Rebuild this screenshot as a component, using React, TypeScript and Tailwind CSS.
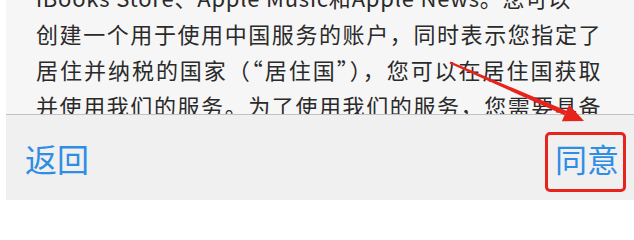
import React from "react";

const font = { fontFamily: '"Noto Sans CJK SC", "Noto Sans", sans-serif' };

export default function App() {
  return (
    <div className="relative w-[634px] h-[203px] bg-white flex overflow-hidden" style={font}>
      <div className="ml-[6px] mb-[3px] flex-1 flex flex-col">
        <div className="h-[114px] overflow-hidden bg-[#f6f6f6]">
          <div className="-mt-[21px] pl-[30px] w-[596px] text-[22px] leading-[36px] tracking-[1.5px] text-[#2a2a2a]">
            <div className="whitespace-nowrap tracking-[0.8px]">iBooks Store、Apple Music和Apple News。您可以</div>
            <div className="whitespace-nowrap text-justify [text-align-last:justify]">创建一个用于使用中国服务的账户，同时表示您指定了</div>
            <div className="whitespace-nowrap text-justify [text-align-last:justify]">居住并纳税的国家（“居住国”），您可以在居住国获取</div>
            <div className="whitespace-nowrap text-justify [text-align-last:justify]">并使用我们的服务。为了使用我们的服务，您需要具备</div>
          </div>
        </div>
        <div className="h-px bg-[#c2c2c2]" />
        <div className="flex-1 bg-[#f0f0f0] flex items-center justify-between pl-[19px] pr-[15px]">
          <span className="text-[32px] leading-none text-[#2f8de4]">返回</span>
          <span className="text-[32px] leading-none text-[#2f8de4]">同意</span>
        </div>
      </div>
      <div className="absolute left-[545px] top-[132px] w-[81px] h-[60px] border-[3px] border-[#e8231c] rounded-[5px]" />
      <svg className="absolute inset-0 pointer-events-none" width="634" height="203" viewBox="0 0 634 203">
        <polygon points="449.6,63.4 450.4,61.6 566.5,110.7 564.5,115.3" fill="#e8231c" />
        <polygon points="584,121 569.1,104.8 561.9,121.2" fill="#e8231c" />
      </svg>
    </div>
  );
}
